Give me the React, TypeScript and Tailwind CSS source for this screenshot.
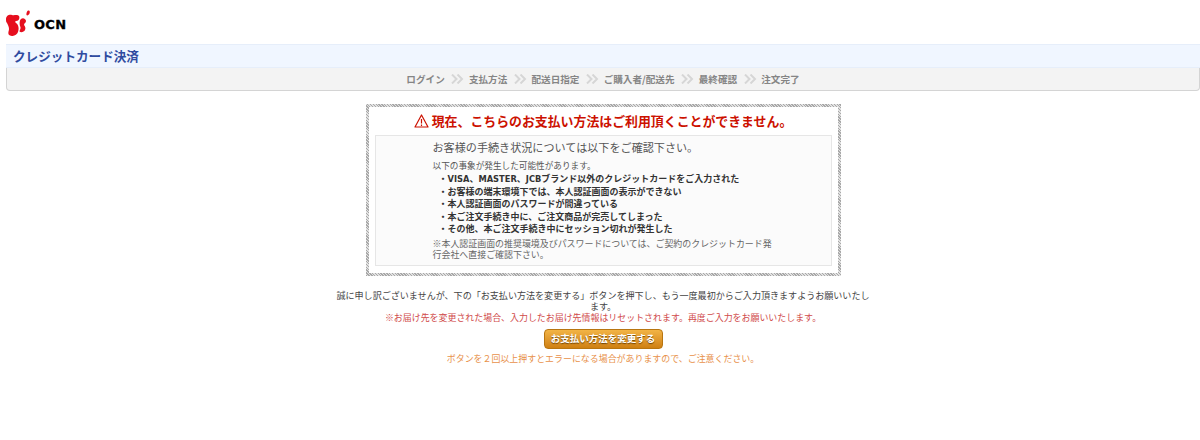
import React from 'react';

const steps = ['ログイン', '支払方法', '配送日指定', 'ご購入者/配送先', '最終確認', '注文完了'];

const reasons = [
  <>
    <span className="font-['DejaVu_Sans',sans-serif] text-[8.300px]">VISA</span>、
    <span className="font-['DejaVu_Sans',sans-serif] text-[8.300px]">MASTER</span>、
    <span className="font-['DejaVu_Sans',sans-serif] text-[8.300px]">JCB</span>ブランド以外のクレジットカードをご入力された
  </>,
  'お客様の端末環境下では、本人認証画面の表示ができない',
  '本人認証画面のパスワードが間違っている',
  '本ご注文手続き中に、ご注文商品が完売してしまった',
  'その他、本ご注文手続き中にセッション切れが発生した',
];

const Logo: React.FC = () => (
  <div className="flex items-center gap-[4px]">
    <svg width="24" height="26" viewBox="0 0 24 26" className="block">
      <path d="M0 9 C0 5 4 4 6 5 C8 6 11 4 13 6 C14 8 13 11 10 11 C9 11 9 12 10 13 C13 15 13 19 12 22 C11 25 7 27 4 25.500 C1 24 3 21 3 19 C3 17 2 15 1 13 C0 12 0 11 0 9 Z" fill="#e60f1e" />
      <path d="M15 9 C17 7 20 9 20 11 C20 13 18 13 18 15 C19 16 20 18 19 20 C18 22 15 23 13.500 21.500 C13.500 20 15 19 14.500 17 C13.500 15 13 11 15 9 Z" fill="#e60f1e" />
      <path d="M22 0.500 C24 0 24 2 23.500 3.500 C23 5 21 6 20.500 5 C20 4 21 1 22 0.500 Z" fill="#e60f1e" />
    </svg>
    <span className="font-['DejaVu_Sans',sans-serif] font-bold text-[13px] leading-none tracking-[0.3px] text-black mt-[2px] [-webkit-text-stroke:0.3px_#000]">OCN</span>
  </div>
);

const Chevrons: React.FC = () => (
  <svg width="13" height="10" viewBox="0 0 13 10" className="block mr-[-2px]">
    <path d="M1 0.500 L5.500 5 L1 9.500 M6.500 0.500 L11 5 L6.500 9.500" fill="none" stroke="#d6d6d6" strokeWidth="2" />
  </svg>
);

function App() {
  return (
    <div className="h-[440px] overflow-hidden bg-white font-['Noto_Sans_CJK_JP',sans-serif] text-[9px] text-[#333] pl-[6px]">
      <header className="h-[44px] pt-[10px]">
        <Logo />
      </header>

      <h1 className="h-[24px] bg-[#f0f6ff] border-y border-[#e6eefa] pl-[7px] text-[12.600px] leading-[22px] font-bold text-[#2f4ba0]">
        クレジットカード決済
      </h1>

      <nav className="h-[23px] bg-[#f3f3f3] border border-t-0 border-[#d4d4d4] rounded-b-[4px] flex items-center justify-center gap-[6.600px] text-[#858585] font-bold text-[9.600px]">
        {steps.map((step, i) => (
          <React.Fragment key={step}>
            {i > 0 && <Chevrons />}
            <span>{step}</span>
          </React.Fragment>
        ))}
      </nav>

      <main className="flex flex-col items-center pt-[13px]">
        <section className="w-[475px] h-[172px] p-[3px] bg-[repeating-linear-gradient(45deg,#a8a8a8_0,#a8a8a8_1px,#e2e2e2_1px,#e2e2e2_2px)]">
          <div className="h-full bg-white px-[6px] pt-[4px]">
            <h2 className="flex items-center justify-center gap-[3px] h-[20px] text-[12.900px] font-bold text-[#cc1100]">
              <svg width="15" height="14" viewBox="0 0 15 14" className="block">
                <path d="M7.500 1 L14 13 L1 13 Z" fill="none" stroke="#cc1100" strokeWidth="1.200" strokeLinejoin="round" />
                <path d="M7.500 5 V9.500 M7.500 10.500 V12" stroke="#cc1100" strokeWidth="1.200" />
              </svg>
              現在、こちらのお支払い方法はご利用頂くことができません。
            </h2>
            <div className="mt-[4px] h-[131px] bg-[#fbfbfb] border border-[#e6e6e6] pl-[57px] pr-[56px] pt-[3px]">
              <p className="text-[11.100px] leading-[16px] text-[#555]">お客様の手続き状況については以下をご確認下さい。</p>
              <p className="mt-[4px] text-[8.650px] leading-[12px] text-[#555]">以下の事象が発生した可能性があります。</p>
              <ul className="mt-[2px] pl-[6px] font-bold text-[9px] leading-[12.600px] text-[#333]">
                {reasons.map((reason, i) => (
                  <li key={i}>・{reason}</li>
                ))}
              </ul>
              <p className="mt-[2px] text-[8.950px] leading-[11px] text-[#666]">
                ※本人認証画面の推奨環境及びパスワードについては、ご契約のクレジットカード発行会社へ直接ご確認下さい。
              </p>
            </div>
          </div>
        </section>

        <div className="w-[535px] mt-[14px] text-center text-[9.050px] leading-[11px]">
          <p className="text-[#444]">
            誠に申し訳ございませんが、下の「お支払い方法を変更する」ボタンを押下し、もう一度最初からご入力頂きますようお願いいたします。
          </p>
          <p className="text-[8.950px] text-[#d04a4a]">※お届け先を変更された場合、入力したお届け先情報はリセットされます。再度ご入力をお願いいたします。</p>
          <button className="mt-[6px] w-[119px] h-[20px] rounded-[4px] border border-[#b87510] bg-gradient-to-b from-[#f2b445] to-[#cf8010] text-white font-bold text-[9.500px] leading-none [text-shadow:0_1px_1px_#6f4300]">
            お支払い方法を変更する
          </button>
          <p className="mt-[4px] text-[8.950px] text-[#e8914a]">ボタンを２回以上押すとエラーになる場合がありますので、ご注意ください。</p>
        </div>
      </main>
    </div>
  );
}

export default App;
